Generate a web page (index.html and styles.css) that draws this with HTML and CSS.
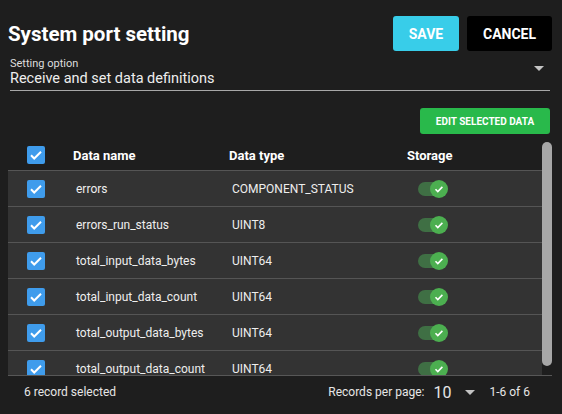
FILE: index.html
```html
<!DOCTYPE html>
<html lang="en">
  <head>
    <meta charset="UTF-8" />
    <meta name="viewport" content="width=device-width, initial-scale=1.0" />
    <title>System port setting</title>
    <link rel="stylesheet" href="styles.css">
  </head>
  <body>
    <div class="header">
      <h1>System port setting</h1>
      <button class="btn btn-save">SAVE</button>
      <button class="btn btn-cancel">CANCEL</button>
    </div>

    <div class="select">
      <div class="select-label">Setting option</div>
      <div class="select-value">Receive and set data definitions</div>
      <span class="caret"></span>
    </div>

    <div class="actions">
      <button class="btn btn-edit">EDIT SELECTED DATA</button>
    </div>

    <div class="table-wrap">
      <div class="table" id="tabel">
        <div class="row head">
          <div class="cell"><span class="check"></span></div>
          <div class="cell">Data name</div>
          <div class="cell">Data type</div>
          <div class="cell">Storage</div>
        </div>
      </div>
      <div class="track"><div class="thumb"></div></div>
    </div>

    <div class="footer">
      <span>6 record selected</span>
      <span class="pager">
        Records per page:
        <span class="per-page">10</span>
        <span class="caret small"></span>
        <span class="range">1-6 of 6</span>
      </span>
    </div>

    <script>
      // data ports
      let data = [
        ["errors", "COMPONENT_STATUS"],
        ["errors_run_status", "UINT8"],
        ["total_input_data_bytes", "UINT64"],
        ["total_input_data_count", "UINT64"],
        ["total_output_data_bytes", "UINT64"],
        ["total_output_data_count", "UINT64"],
      ];

      let checkSvg =
        '<svg viewBox="0 0 18 18" width="18" height="18"><path d="M4 9.3l3.2 3.2L14 5.7" fill="none" stroke="#fff" stroke-width="2"/></svg>';

      document.querySelectorAll(".check").forEach((el) => (el.innerHTML = checkSvg));

      let tabel = document.querySelector("#tabel");
      data.forEach((d) => {
        let row = document.createElement("div");
        row.className = "row";
        row.innerHTML =
          '<div class="cell"><span class="check">' + checkSvg + "</span></div>" +
          '<div class="cell txt">' + d[0] + "</div>" +
          '<div class="cell txt">' + d[1] + "</div>" +
          '<div class="cell"><span class="toggle"><span class="knob">' +
          '<svg viewBox="0 0 18 18" width="18" height="18"><path d="M5.5 9.2l2.3 2.3 4.6-4.6" fill="none" stroke="#fff" stroke-width="1.6"/></svg>' +
          "</span></span></div>";
        tabel.appendChild(row);
      });
    </script>
  </body>
</html>
```

FILE: styles.css
```css
body {
  margin: 0;
  background-color: #1e1e1e;
  color: #fff;
  font-family: Roboto, "Liberation Sans", sans-serif;
  width: 562px;
  height: 414px;
  overflow: hidden;
}

.header {
  display: flex;
  align-items: center;
  padding: 16px 10px 0 8px;
  gap: 8px;
}
h1 {
  flex: 1;
  margin: 0;
  font-size: 20.5px;
  font-weight: 700;
}
.btn {
  border: none;
  border-radius: 3px;
  color: #fff;
  font-family: inherit;
  font-weight: 700;
  cursor: pointer;
}
.btn-save {
  width: 66px;
  height: 35px;
  background-color: #38cde9;
  font-size: 14px;
}
.btn-cancel {
  width: 85px;
  height: 35px;
  background-color: #000;
  font-size: 14px;
}

.select {
  position: relative;
  margin: 6px 12px 0 10px;
  padding-bottom: 3px;
  border-bottom: 1px solid #a8a8a8;
}
.select-label {
  font-size: 11px;
  line-height: 13px;
  color: #ddd;
}
.select-value {
  font-size: 14.5px;
  line-height: 17px;
  color: #eee;
}
.caret {
  position: absolute;
  right: 6px;
  top: 9px;
  border-left: 5px solid transparent;
  border-right: 5px solid transparent;
  border-top: 5px solid #c4c4c4;
}
.caret.small {
  position: static;
  display: inline-block;
  margin: 0 14px 0 14px;
  vertical-align: middle;
}

.actions {
  display: flex;
  justify-content: flex-end;
  padding: 17px 12px 0 0;
}
.btn-edit {
  width: 130px;
  height: 26px;
  background-color: #29b94b;
  font-size: 10px;
}

.table-wrap {
  display: flex;
  margin: 6px 10px 0 8px;
  height: 235px;
  border-bottom: 1px solid #575757;
  overflow: hidden;
}
.table {
  flex: 1;
}
.track {
  width: 10px;
  padding-top: 2px;
}
.thumb {
  height: 224px;
  border-radius: 5px;
  background-color: #a7a7a7;
}
.row {
  display: grid;
  grid-template-columns: 65px 156px 178px 1fr;
  align-items: center;
  height: 35px;
  background-color: #333;
  border-top: 1px solid #555;
}
.row.head {
  height: 30px;
  background-color: transparent;
  border-top: none;
  font-size: 13px;
  font-weight: 700;
}
.cell:first-child {
  padding-left: 19px;
  display: flex;
}
.txt {
  padding-left: 3px;
  font-size: 12px;
  color: #eee;
}
.check {
  display: block;
  width: 18px;
  height: 18px;
  border-radius: 2px;
  background-color: #3f9cec;
}
.check svg {
  display: block;
}
.toggle {
  display: block;
  position: relative;
  margin-left: 11px;
  width: 27px;
  height: 14px;
  border-radius: 7px;
  background-color: #3f6f44;
}
.knob {
  position: absolute;
  right: -3px;
  top: -2px;
  width: 18px;
  height: 18px;
  border-radius: 50%;
  background-color: #4caf50;
}
.knob svg {
  display: block;
}

.footer {
  display: flex;
  justify-content: space-between;
  align-items: center;
  height: 32px;
  padding: 0 32px 0 24px;
  font-size: 12px;
  color: #e6e6e6;
}
.pager {
  display: flex;
  align-items: center;
}
.per-page {
  margin-left: 9px;
  font-size: 16px;
}
```
